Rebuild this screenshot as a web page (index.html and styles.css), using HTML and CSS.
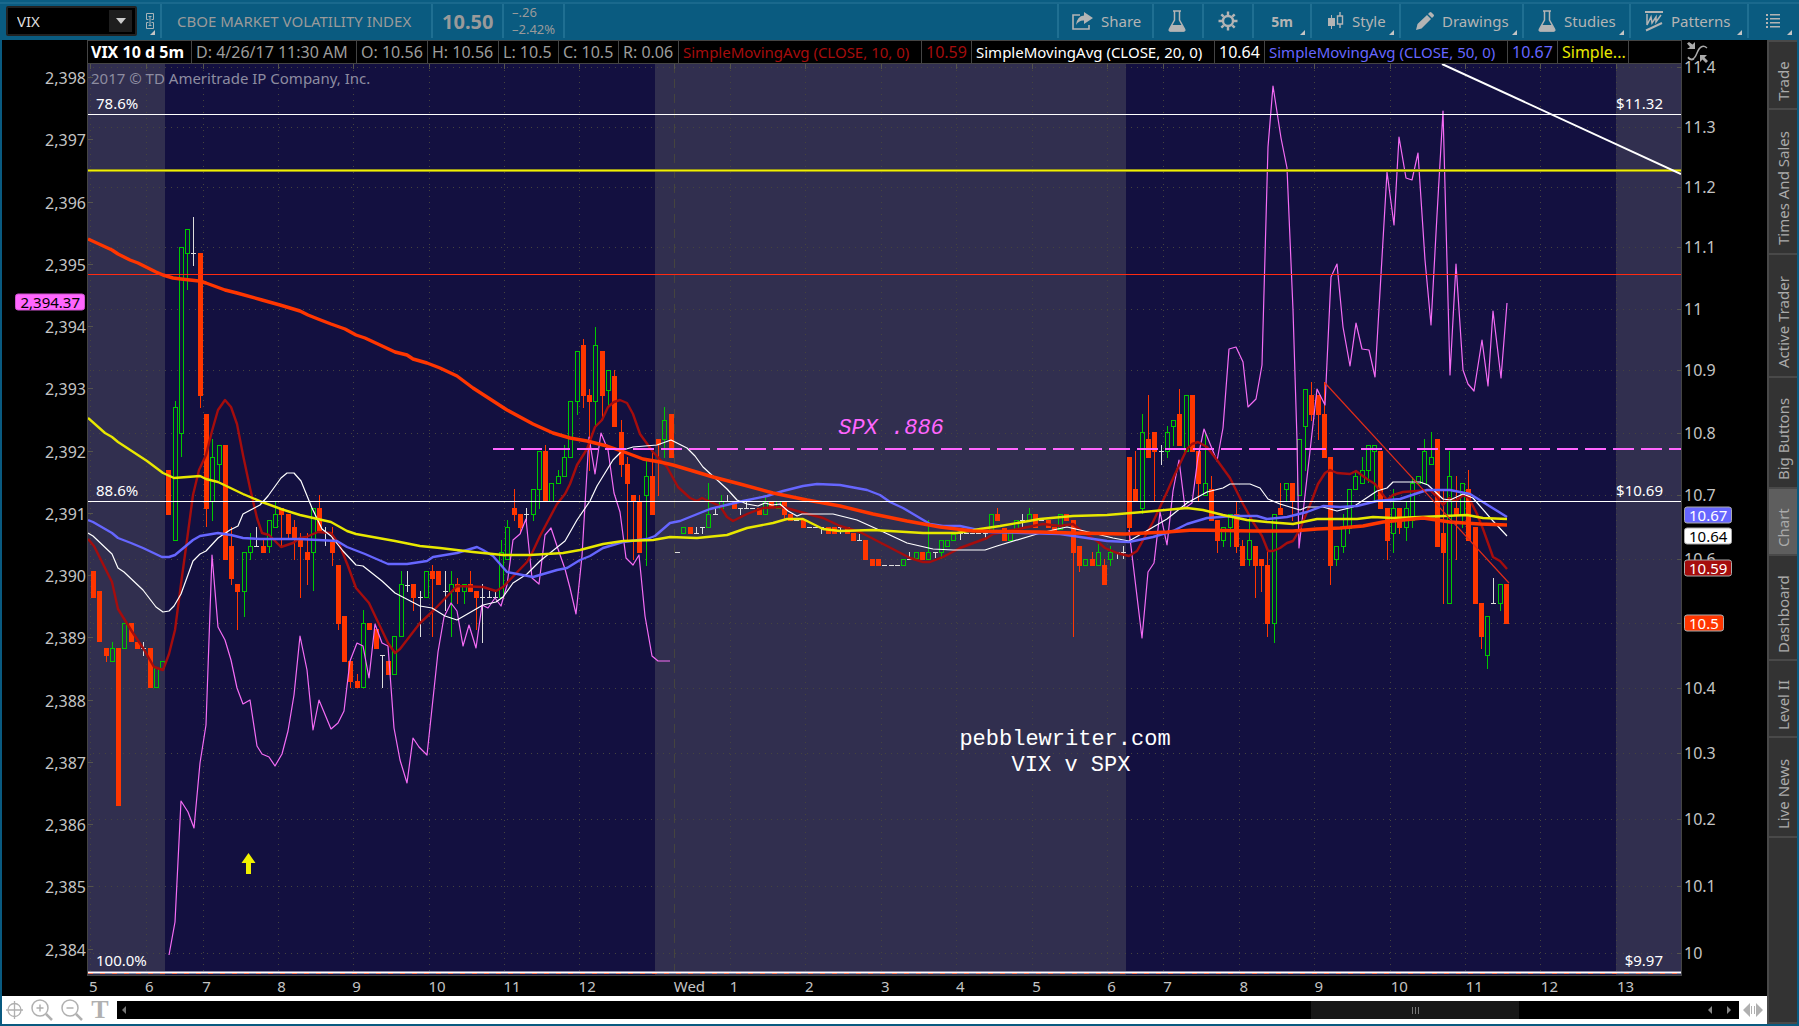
FILE: index.html
```html
<!DOCTYPE html>
<html lang="en">
<head>
    <meta charset="UTF-8">
    <meta name="viewport" content="width=device-width, initial-scale=1.0">
    <title>VIX 10 d 5m</title>
    <link rel="stylesheet" href="styles.css">
</head>
<body>
    <!-- Top toolbar -->
    <header class="toolbar">
        <div class="symbol-cell">
            <div class="symbol-box">
                <input type="text" class="symbol-input" value="VIX" aria-label="Symbol">
                <button class="symbol-drop" aria-label="Choose symbol"><svg width="10" height="6" viewBox="0 0 10 6"><path d="M0 0h10L5 6z" fill="#ccc"/></svg></button>
            </div>
            <button class="link-button" aria-label="Link">
                <svg width="8" height="16" viewBox="0 0 8 16" fill="none" stroke="#a9b4b9"><path d="M2.500 6.500H.5v-6h7v6h-2M2.500 9.500H.5v6h7v-6h-2M2.500 3.500h3M2.500 12.500h3M4 3.500v9"/></svg>
            </button>
        </div>
        <div class="tool-cell name-cell">CBOE MARKET VOLATILITY INDEX</div>
        <div class="tool-cell last-cell">10.50</div>
        <div class="tool-cell change-cell"><span>–.26</span><span>–2.42%</span></div>
        <div class="tool-cell spacer"></div>
        <button class="tool-cell share-cell">
            <svg width="21" height="18" viewBox="0 0 21 18"><path d="M8 3H1v14h16v-4" fill="none" stroke="#b4b4b4" stroke-width="1.6"/><path d="M12 0l9 6-9 6V8.500Q7 8 4 13Q5 4 12 3.500z" fill="#b4b4b4"/></svg>
            Share
        </button>
        <button class="tool-cell flask-cell" aria-label="Studies lab">
            <svg width="18" height="22" viewBox="0 0 18 22"><path d="M5 1h8M6.500 1v9L1.500 19q-1 2 1 2h13q2 0 1-2l-5-9V1" fill="none" stroke="#b4b4b4" stroke-width="1.500"/><path d="M4 15h10l3 5-1 1.500H2L1 20z" fill="#b4b4b4"/></svg>
        </button>
        <button class="tool-cell gear-cell" aria-label="Settings">
            <svg width="20" height="20" viewBox="-10 -10 20 20" stroke="#b4b4b4"><circle r="5" fill="none" stroke-width="2.400"/><path d="M0-9.500V-6M0 9.500V6M-9.500 0H-6M9.500 0H6M-6.700-6.700L-4.300-4.300M6.700 6.700L4.300 4.300M-6.700 6.700L-4.300 4.300M6.700-6.700L4.300-4.300" stroke-width="2.400"/></svg>
        </button>
        <button class="tool-cell period-cell has-menu">5m</button>
        <button class="tool-cell style-cell has-menu">
            <svg width="16" height="20" viewBox="0 0 16 20"><path d="M0 7h7v8H0zM3 4h1v14H3z" fill="#b4b4b4"/><path d="M9.500 5h5v8h-5zM12 1v4M12 13v4" fill="none" stroke="#b4b4b4" stroke-width="1.400"/></svg>
            Style
        </button>
        <button class="tool-cell drawings-cell has-menu">
            <svg width="18" height="18" viewBox="0 0 18 18" fill="#b4b4b4"><path d="M0 18l1.500-6L11 3l4 4-9.500 9.500zM12 2l1.500-1.500q1-1 2 0l2 2q1 1 0 2L16 6z"/></svg>
            Drawings
        </button>
        <button class="tool-cell studies-cell has-menu">
            <svg width="18" height="22" viewBox="0 0 18 22"><path d="M5 1h8M6.500 1v9L1.500 19q-1 2 1 2h13q2 0 1-2l-5-9V1" fill="none" stroke="#b4b4b4" stroke-width="1.500"/><path d="M4 15h10l3 5-1 1.500H2L1 20z" fill="#b4b4b4"/></svg>
            Studies
        </button>
        <button class="tool-cell patterns-cell has-menu">
            <svg width="18" height="22" viewBox="0 0 18 22" fill="none" stroke="#b4b4b4"><path d="M0 2h18M1 20.500L17 13" stroke-width="2"/><path d="M2 4v11l4-8 1 6 4-6v5l5-7" stroke-width="1.500"/></svg>
            Patterns
        </button>
        <button class="tool-cell list-cell has-menu" aria-label="Menu">
            <svg width="14" height="14" viewBox="0 0 14 14" fill="#b4b4b4"><path d="M0 0h2v2H0zM4 0h10v1.500H4zM0 4h2v2H0zM4 4h10v1.500H4zM0 8h2v2H0zM4 8h10v1.500H4zM0 12h2v2H0zM4 12h10v1.500H4z"/></svg>
        </button>
    </header>

    <div class="workspace">
        <main class="chart">
            <div class="info-bar">
                <span class="info info-title">VIX 10 d 5m</span>
                <span class="info info-date">D: 4/26/17 11:30 AM</span>
                <span class="info info-wide">O: 10.56</span>
                <span class="info info-wide">H: 10.56</span>
                <span class="info info-short">L: 10.5</span>
                <span class="info info-short">C: 10.5</span>
                <span class="info info-short">R: 0.06</span>
                <span class="info info-study red">SimpleMovingAvg (CLOSE, 10, 0)</span>
                <span class="info info-value red">10.59</span>
                <span class="info info-study white">SimpleMovingAvg (CLOSE, 20, 0)</span>
                <span class="info info-value white">10.64</span>
                <span class="info info-study blue">SimpleMovingAvg (CLOSE, 50, 0)</span>
                <span class="info info-value blue">10.67</span>
                <span class="info info-more yellow">Simple...</span>
                <span class="info info-rest"></span>
            </div>
            <button class="fit-button" aria-label="Fit chart">
                <svg width="21" height="21" viewBox="0 0 21 21"><path d="M1 15q5 6 9-4t10-5M1 16q3 3 6 1" fill="none" stroke="#aaa" stroke-width="1.500"/><path d="M0 7h8V0L5.500 2.500 2 0 0 1.500 3 5zM20 13h-7v7l2.500-2.500L19 21l2-2-3.500-3.500z" fill="#aaa"/></svg>
            </button>
            <div class="axis left-axis" id="leftAxis"></div>
            <div class="plot" id="plot">
                <svg class="plot-svg" id="plotSvg" viewBox="88 64 1593 911" preserveAspectRatio="none"></svg>
                <p class="copyright">2017 © TD Ameritrade IP Company, Inc.</p>
            </div>
            <div class="axis right-axis" id="rightAxis"></div>
            <div class="time-axis" id="timeAxis"></div>
        </main>

        <nav class="side-tabs">
            <button class="side-tab tab-trade">Trade</button>
            <button class="side-tab tab-times">Times And Sales</button>
            <button class="side-tab tab-active-trader">Active Trader</button>
            <button class="side-tab tab-big">Big Buttons</button>
            <button class="side-tab tab-chart selected">Chart</button>
            <button class="side-tab tab-dashboard">Dashboard</button>
            <button class="side-tab tab-level">Level II</button>
            <button class="side-tab tab-news">Live News</button>
            <div class="side-rest"></div>
        </nav>

        <!-- Zoom tools and scrollbar -->
        <footer class="bottom-bar">
            <button aria-label="Crosshair"><svg width="17" height="18" viewBox="0 0 17 18" fill="none" stroke="#b0b0b0" stroke-width="1.300"><circle cx="8.500" cy="9" r="6.500"/><path d="M8.500 0v18M0 9h17"/></svg></button>
            <button aria-label="Zoom in"><svg width="22" height="22" viewBox="0 0 22 22" fill="none" stroke="#b0b0b0" stroke-width="1.500"><circle cx="9" cy="9" r="8"/><path d="M9 5.500v7M5.500 9h7"/><path d="M15 15l6 6" stroke-width="2.500"/></svg></button>
            <button aria-label="Zoom out"><svg width="22" height="22" viewBox="0 0 22 22" fill="none" stroke="#b0b0b0" stroke-width="1.500"><circle cx="9" cy="9" r="8"/><path d="M5.500 9h7"/><path d="M15 15l6 6" stroke-width="2.500"/></svg></button>
            <button class="text-tool" aria-label="Text">T</button>
            <div class="scrollbar">
                <button aria-label="Scroll to start"><svg width="4" height="8" viewBox="0 0 4 8"><path d="M4 0v8L0 4z" fill="#777"/></svg></button>
                <div class="scroll-track"><div class="scroll-thumb"><i></i><i></i><i></i></div></div>
                <button aria-label="Scroll left"><svg width="4" height="8" viewBox="0 0 4 8"><path d="M4 0v8L0 4z" fill="#888"/></svg></button>
                <button aria-label="Scroll right"><svg width="4" height="8" viewBox="0 0 4 8"><path d="M0 0v8l4-4z" fill="#888"/></svg></button>
            </div>
            <button class="expand-button" aria-label="Expand range"><svg width="20" height="14" viewBox="0 0 20 14" fill="#b0b0b0"><path d="M7 0v14L0 7zM13 0v14l7-7zM8 3h1v8H8zM11 3h1v8h-1z"/></svg></button>
        </footer>
    </div>

    <script src="chart.js"></script>
</body>
</html>
```
FILE: styles.css
```css
* {
    box-sizing: border-box;
}

body {
    margin: 0;
    height: 100vh;
    display: flex;
    flex-direction: column;
    background-color: #095a80;
    color: #c4c4c4;
    font-family: "Noto Sans", "Open Sans", sans-serif;
    font-size: 15px;
    overflow: hidden;
}

button {
    margin: 0;
    padding: 0;
    border: none;
    background: none;
    color: inherit;
    font: inherit;
    cursor: pointer;
}

svg {
    display: block;
    flex: none;
}

/* Toolbar */
.toolbar {
    height: 40px;
    flex: none;
    display: flex;
    padding: 4px 2px 2px;
    background: linear-gradient(#0b5d82 2px, #1a698d 2px, #1a698d 4px, #0a5b80 4px);
    white-space: nowrap;
}

.symbol-cell {
    width: 158px;
    display: flex;
    align-items: center;
    gap: 9px;
    padding-left: 4px;
    position: relative;
}

.symbol-box {
    width: 131px;
    height: 30px;
    display: flex;
    align-items: center;
    padding: 0 3px 0 9px;
    border: 2px solid #222;
    border-radius: 2px;
    background-color: #000;
}

.symbol-input {
    flex: 1;
    min-width: 0;
    padding: 0;
    border: none;
    background: none;
    color: #ddd;
    font: 15px "Noto Sans", sans-serif;
}

.symbol-drop {
    width: 23px;
    height: 22px;
    display: flex;
    align-items: center;
    justify-content: center;
    background-color: #1e1e1e;
}

.tool-cell {
    display: flex;
    align-items: center;
    gap: 8px;
    border-left: 2px solid #1f6f92;
    color: #b4b4b4;
    font-size: 15px;
    position: relative;
}

/* Small corner triangle on buttons with a menu */
.has-menu::after,
.symbol-cell::after {
    content: "";
    position: absolute;
    right: 5px;
    bottom: 3px;
    border-left: 5px solid transparent;
    border-bottom: 5px solid #c4c4c4;
}

.name-cell {
    width: 271px;
    padding-left: 15px;
    color: #9a9a9a;
}

.last-cell {
    width: 71px;
    padding-left: 9px;
    color: #9a9a9a;
    font-size: 20px;
    font-weight: bold;
}

.change-cell {
    width: 61px;
    padding-left: 8px;
    flex-direction: column;
    align-items: flex-start;
    justify-content: center;
    gap: 0;
    color: #9a9a9a;
    font-size: 13px;
    line-height: 17px;
}

.spacer {
    flex: 1;
}

.share-cell {
    width: 95px;
    padding-left: 13px;
}

.flask-cell,
.gear-cell {
    width: 50px;
    padding-left: 14px;
}

.period-cell {
    width: 58px;
    justify-content: center;
    font-size: 14px;
    font-weight: bold;
}

.style-cell {
    width: 89px;
    padding-left: 16px;
}

.drawings-cell {
    width: 123px;
    padding-left: 15px;
}

.studies-cell {
    width: 107px;
    padding-left: 14px;
}

.patterns-cell {
    width: 118px;
    padding-left: 14px;
}

.list-cell {
    width: 50px;
    padding-left: 17px;
}

/* Chart area, tabs on the right, tools at the bottom */
.workspace {
    flex: 1;
    min-height: 0;
    display: grid;
    grid-template-columns: 1fr 30px;
    grid-template-rows: 1fr 28px;
    margin: 0 2px 2px;
    background-color: #000;
}

.chart {
    min-width: 0;
    min-height: 0;
    display: grid;
    grid-template-columns: 85px 1fr 85px;
    grid-template-rows: 24px 1fr 20px;
}

.info-bar {
    grid-column: 2;
    display: flex;
    border: 1px solid #444;
    border-left: none;
    overflow: hidden;
    white-space: nowrap;
}

.info {
    flex: none;
    padding-left: 4px;
    border-left: 1px solid #444;
    color: #9c9c9c;
    font-size: 16px;
    line-height: 22px;
    overflow: hidden;
}

.info-title {
    width: 104px;
    padding-left: 3px;
    color: #fff;
    font-weight: bold;
}

.info-date {
    width: 165px;
}

.info-wide {
    width: 71px;
}

.info-short {
    width: 60px;
}

.info-study {
    width: 243px;
    font-size: 15px;
}

.info-value {
    width: 50px;
}

.info-more {
    width: 71px;
}

.info-rest {
    flex: 1;
}

.info.red {
    color: #a50d0d;
}

.info.white {
    color: #fff;
}

.info.blue {
    color: #6666ff;
}

.info.yellow {
    color: #e8e800;
}

.fit-button {
    padding: 2px 0 0 5px;
    align-self: start;
    justify-self: start;
}

.axis {
    position: relative;
    font-size: 16px;
}

.left-axis {
    grid-column: 1;
}

.axis-label {
    position: absolute;
    line-height: 20px;
    transform: translateY(-50%);
}

.left-axis .axis-label {
    right: 1px;
}

.right-axis .axis-label {
    left: 2px;
}

.price-tag {
    position: absolute;
    padding: 0 4px;
    border: 1px solid #aaa;
    border-radius: 3px;
    font-size: 15px;
    line-height: 15px;
    transform: translateY(-50%);
}

.left-axis .price-tag {
    right: 2px;
}

.right-axis .price-tag {
    left: 2px;
}

.tag-spx {
    background-color: #ff66ff;
    border-color: #cc52cc;
    color: #000;
}

.tag-blue {
    background-color: #6666ff;
    color: #fff;
}

.tag-white {
    background-color: #fff;
    color: #000;
}

.tag-red {
    background-color: #a50d0d;
    color: #fff;
}

.tag-orange {
    background-color: #ff3600;
    color: #fff;
}

.plot {
    position: relative;
    border: 1px solid #444;
    border-top: none;
    background-color: #131040;
    overflow: hidden;
}

.plot-svg {
    width: 100%;
    height: 100%;
}

.copyright {
    position: absolute;
    top: 4px;
    left: 3px;
    margin: 0;
    color: #8d8ca0;
    font-size: 15px;
    line-height: 20px;
}

.level-label,
.note {
    position: absolute;
    color: #fff;
    line-height: 20px;
    white-space: nowrap;
    transform: translateY(-50%);
}

.level-left {
    left: 8px;
}

.level-right {
    right: 18px;
}

.note {
    font-family: "Courier New", "Liberation Mono", monospace;
    font-size: 22px;
    line-height: 26px;
    text-align: center;
    transform: translate(-50%, -50%);
}

.note-spx {
    color: #ff66ff;
    font-style: italic;
}

.time-axis {
    grid-column: 2;
    position: relative;
}

.time-label {
    position: absolute;
    top: 0;
    line-height: 20px;
}

/* Shapes drawn in the plot */
.band {
    fill: #312f4f;
}

.grid {
    stroke: #45443f;
    stroke-width: 1;
    stroke-dasharray: 1 5;
}

.grid-day {
    stroke: #45443f;
    stroke-dasharray: 9 6;
}

.tick {
    stroke: #55544c;
}

.line {
    fill: none;
    stroke-linejoin: round;
}

.sma-red {
    stroke: #a50d0d;
    stroke-width: 2.4;
}

.sma-white {
    stroke: #fff;
    stroke-width: 1.2;
}

.sma-blue {
    stroke: #6666ff;
    stroke-width: 2.4;
}

.sma-yellow {
    stroke: #e8e800;
    stroke-width: 2.4;
}

.sma-orange {
    stroke: #ff3600;
    stroke-width: 3.4;
}

.spx {
    stroke: #f56cf5;
    stroke-width: 1.2;
}

.crisp {
    shape-rendering: crispEdges;
}

.up {
    fill: none;
    stroke: #00c800;
}

.down {
    fill: #ff3600;
    stroke: none;
}

.down-wick {
    stroke: #ff3600;
}

.flat {
    stroke: #ddd;
}

/* Right side tabs */
.side-tabs {
    grid-row: 1 / 3;
    grid-column: 2;
    display: flex;
    flex-direction: column;
    gap: 2px;
    padding: 2px 0 2px 2px;
    background-color: #494949;
}

/* Rotated by half a turn, so the bottom padding is seen on top */
.side-tab {
    writing-mode: vertical-rl;
    transform: rotate(180deg);
    width: 28px;
    padding-bottom: 13px;
    background-color: #333;
    color: #aaa;
    font-size: 15px;
    line-height: 28px;
    text-align: center;
}

.side-tab.selected {
    background-color: #5e5e5e;
}

.tab-trade {
    height: 66px;
}

.tab-times {
    height: 143px;
}

.tab-active-trader {
    height: 121px;
}

.tab-big {
    height: 109px;
}

.tab-chart {
    height: 65px;
}

.tab-dashboard {
    height: 103px;
}

.tab-level {
    height: 75px;
}

.tab-news {
    height: 98px;
}

.side-rest {
    flex: 1;
    background-color: #333;
}

/* Bottom tools */
.bottom-bar {
    grid-row: 2;
    grid-column: 1;
    display: flex;
    align-items: center;
    gap: 8px;
    padding: 0 4px;
    background-color: #fff;
}

.text-tool {
    width: 18px;
    color: #b0b0b0;
    font: bold 26px/28px "Liberation Serif", serif;
}

.scrollbar {
    flex: 1;
    height: 18px;
    display: flex;
    align-items: center;
    gap: 15px;
    padding: 0 8px 0 5px;
    background-color: #000;
}

.scroll-track {
    flex: 1;
    align-self: stretch;
}

.scroll-thumb {
    width: 13.4%;
    height: 100%;
    margin-left: 75.4%;
    display: flex;
    align-items: center;
    justify-content: center;
    gap: 2px;
    background-color: #181818;
}

.scroll-thumb i {
    width: 1px;
    height: 7px;
    background-color: #777;
}

.expand-button {
    margin-left: -4px;
}
```
FILE: chart.js
```js
// Plot bounds, same units as the viewBox
const LEFT = 88;
const TOP = 64;
const WIDTH = 1593;
const HEIGHT = 911;
const RIGHT = LEFT + WIDTH;
const BOTTOM = TOP + HEIGHT;

// One bar per 5 minutes: kind, high, top of body, bottom of body, low (r = down, g = up, w = unchanged)
const bars = `
r571,571,598,598 r591,591,642,642 r648,648,656,662 g642,648,661,661 r648,648,806,806 g623,623,648,648
r623,623,642,642 r642,642,649,649 w642,648,648,656 r648,648,688,688 g668,668,687,687 g661,661,668,668
r470,470,515,515 g401,407,540,540 g247,247,433,457 g229,229,253,290 w217,253,253,266 r253,253,396,408
r414,414,509,527 g439,457,501,521 g445,445,464,481 r445,445,560,560 r527,546,579,585 r584,584,592,630
g552,552,591,617 g533,546,552,560 w527,546,546,546 r539,546,553,553 g520,520,546,553 g501,514,527,527
r508,508,515,546 r514,514,534,540 r520,527,540,560 r533,540,547,598 r533,552,560,585 g508,508,552,591
r495,508,531,531 w527,532,532,546 r527,542,553,566 r565,565,624,630 r616,616,662,662 r661,661,682,688
r674,681,688,688 g610,623,687,687 r623,623,630,630 r629,629,649,649 w655,655,655,688 r661,661,675,675
g636,636,674,674 g571,584,636,636 w571,585,585,592 r584,584,598,611 w591,597,597,637 g571,571,597,597
r565,571,579,637 r571,571,585,585 w571,591,591,611 g571,584,591,637 r578,584,592,604 g584,584,591,604
r571,584,592,592 r591,591,598,630 w584,597,597,643 w591,597,597,597 w591,597,597,597 g540,552,597,597
g520,527,559,559 r489,508,515,521 r514,514,528,534 w508,514,514,521 g489,489,514,521 g451,451,489,509
r445,451,501,501 g483,483,501,501 g470,476,483,483 g445,457,476,476 g401,401,457,457 g351,351,401,415
r339,345,396,408 r389,395,402,471 g327,345,401,426 r351,351,396,420 g370,370,390,407 r370,376,427,427
r420,432,465,477 r457,464,484,540 r495,495,501,560 r495,501,553,553 g458,476,495,566 r453,476,515,515
r439,439,445,496 g407,420,439,458 r414,414,458,458 w552,552,552,552 g527,527,533,533 r527,527,534,534
w527,533,533,533 w527,527,527,534 g483,514,527,527 w508,514,514,514 g495,501,508,508 w495,501,501,501
r501,501,509,509 w508,508,508,515 w501,508,508,508 w508,508,508,508 r508,508,515,515 g497,501,514,514
r501,501,508,508 g501,501,508,508 r501,501,515,519 r514,514,521,521 w520,520,520,520 r520,520,528,528
w527,527,527,527 w527,527,527,527 w527,527,527,534 r527,527,534,534 r527,527,534,534 w527,527,527,534
r527,527,534,534 r533,533,541,541 w534,540,540,540 r540,540,560,560 r559,559,566,566 r559,559,566,566
w565,565,565,565 w565,565,565,565 w565,565,565,565 g559,559,565,565 w552,559,559,559 g552,552,558,558
r552,552,560,560 g520,552,559,559 w552,552,552,558 g540,540,552,559 g540,540,546,546 g534,534,540,540
w533,533,533,540 w533,533,533,533 w533,533,533,533 w533,533,533,533 w533,533,533,540 g514,514,530,530
r508,514,521,521 r528,528,541,541 g533,533,540,540 g520,520,529,529 w514,520,520,527 g508,514,520,520
r514,514,528,528 w520,520,520,520 r520,520,528,528 r527,527,531,531 g514,514,529,529 r514,514,521,521
r520,520,553,637 r546,546,566,572 g559,559,565,565 r552,559,566,566 g542,552,565,565 r559,565,585,585
g546,552,559,566 w552,552,552,559 w546,552,552,559 r457,457,528,541 r451,489,501,501 g414,432,508,514
r395,439,458,458 r432,432,452,501 w445,451,451,465 g426,432,451,458 g420,420,426,446 r389,414,446,446
g395,395,451,451 r395,395,452,452 r451,451,484,501 g432,483,495,495 r476,489,521,521 r520,520,541,553
g527,527,540,547 g514,514,527,547 r502,514,547,553 r540,546,566,566 g514,540,559,566 r546,546,566,598
r559,559,566,592 r551,565,624,637 g514,514,623,643 r483,508,515,515 g483,483,489,501 r483,483,501,521
g439,439,495,495 g389,389,426,471 r382,395,415,421 r395,395,415,440 r382,414,458,458 r457,457,566,585
g546,546,559,566 g514,527,546,553 g489,489,528,534 g472,476,489,489 g457,470,483,483 g445,445,470,483
g445,445,451,502 r451,451,509,509 r508,508,541,560 g489,508,533,553 r508,508,528,534 g502,508,527,541
g477,483,520,528 g476,476,483,483 g439,451,483,483 g432,457,464,464 r439,439,547,547 r489,533,553,604
g451,476,603,603 r476,508,515,560 g483,483,515,528 r470,489,541,541 r527,527,604,604 r603,603,637,649
g616,616,655,669 w578,603,603,603 g584,584,603,611 r584,584,624,624
`.trim().split(/\s+/);

const smaRed = '88,539 94,546 112,582 118,609 131,630 143,648 154,667 163,670 169,654 175,630 181,584 187,540 193,495 199,470 206,455 212,431 218,410 225,400 231,407 237,424 243,455 250,488 257,518 262,533 269,535 281,547 293,543 300,538 306,537 318,532 331,533 340,546 348,566 356,588 369,603 377,620 388,643 395,653 400,649 420,623 433,611 457,586 483,587 496,591 503,587 527,562 533,551 540,536 557,504 565,494 570,484 577,465 587,449 595,427 602,420 608,407 614,402 620,400 627,403 633,414 640,434 653,452 667,467 678,487 690,498 697,501 702,498 713,503 720,506 727,517 733,521 747,514 763,508 783,507 797,511 823,518 840,526 860,532 887,546 910,558 923,562 930,562 943,557 960,548 987,538 993,534 1023,528 1043,524 1060,526 1073,524 1083,532 1097,541 1105,548 1117,553 1129,556 1137,551 1153,522 1167,492 1175,474 1187,449 1192,444 1198,442 1207,447 1217,460 1230,478 1243,504 1253,522 1262,536 1268,551 1273,551 1280,548 1287,543 1293,541 1300,529 1312,500 1318,484 1325,473 1330,470 1337,473 1350,474 1356,471 1367,479 1375,484 1380,491 1387,500 1393,495 1403,492 1417,491 1430,490 1437,497 1443,505 1449,498 1456,501 1463,495 1469,498 1477,514 1483,529 1493,557 1500,561 1507,569';

const smaWhite = '88,533 93,536 112,554 118,568 124,572 143,590 156,607 163,612 169,611 174,606 181,594 193,561 200,554 206,551 218,538 230,530 238,526 243,514 260,505 268,496 281,478 287,473 294,473 301,481 312,508 322,529 331,536 343,551 356,565 363,566 382,581 395,593 420,606 432,608 445,616 457,620 483,605 496,602 503,597 513,583 527,574 540,561 565,541 577,520 590,501 597,486 613,460 623,450 633,447 657,445 671,440 687,448 695,456 703,467 727,489 737,500 747,504 758,506 765,503 772,505 780,504 788,511 797,516 802,514 833,514 857,520 877,529 907,543 933,549 953,550 985,550 997,546 1037,534 1053,530 1067,527 1080,530 1113,538 1129,541 1143,533 1167,519 1187,503 1207,492 1223,488 1230,484 1250,484 1260,488 1268,499 1280,504 1300,510 1307,507 1323,507 1337,511 1353,507 1377,491 1387,488 1393,482 1420,482 1428,485 1443,499 1450,500 1463,494 1473,498 1493,521 1507,536';

const smaBlue = '88,520 93,522 112,533 118,538 131,543 143,548 162,557 169,557 175,555 193,540 200,536 218,533 231,535 243,538 260,539 300,539 337,541 347,547 365,554 388,564 407,564 427,561 433,557 457,553 477,547 483,550 493,556 507,572 533,577 557,570 567,568 580,560 590,556 603,548 623,542 647,539 655,536 670,523 680,521 710,509 743,501 767,496 783,491 803,486 817,484 840,485 867,490 880,495 890,502 903,508 930,524 943,526 960,526 987,532 1060,534 1107,541 1129,542 1153,537 1173,531 1187,524 1207,518 1233,516 1257,516 1267,519 1287,517 1307,512 1323,506 1340,507 1357,506 1377,501 1400,499 1427,490 1450,490 1470,494 1507,517';

const smaYellow = '88,418 105,433 112,437 118,442 147,461 163,473 174,478 187,477 200,476 206,479 218,482 243,494 262,502 281,509 300,515 331,522 347,531 356,534 395,541 420,546 440,548 473,552 503,555 530,555 563,553 580,550 603,544 623,541 653,540 670,537 697,538 727,535 747,528 773,523 787,519 803,519 823,529 840,531 873,530 923,533 957,533 980,529 1000,526 1040,519 1073,516 1107,515 1143,512 1187,508 1203,510 1223,515 1247,520 1267,522 1293,524 1317,519 1357,519 1373,517 1393,518 1420,517 1467,515 1483,518 1507,519';

const smaOrange = '88,239 112,250 118,254 130,260 138,263 156,272 163,275 173,278 181,279 199,281 206,283 225,290 237,293 262,300 280,305 300,311 308,315 318,319 331,324 345,329 356,335 365,338 395,352 407,355 413,359 427,363 440,368 457,376 473,388 507,410 533,424 553,433 570,438 587,441 607,446 627,453 643,459 660,462 673,465 713,477 740,484 773,493 807,500 840,506 873,514 907,521 940,527 973,531 1040,532 1073,533 1125,534 1167,532 1193,530 1253,531 1293,531 1317,529 1340,528 1363,526 1383,522 1423,518 1450,522 1480,524 1507,525';

const spxTuesday = '169,955 175,922 181,801 188,812 194,828 200,763 206,725 212,555 218,627 225,640 231,660 237,688 243,704 250,700 257,746 262,754 269,757 275,766 282,754 288,731 294,695 300,636 307,670 313,730 319,700 331,729 338,723 344,711 350,661 357,643 363,646 369,678 375,624 382,643 388,646 394,728 400,760 407,783 413,738 419,747 427,755 438,652 444,617 451,603 457,611 463,646 469,625 476,648 482,605 488,608 495,598 501,606 507,585 513,540 520,534 526,519 532,578 539,584 545,535 551,528 558,549 565,569 570,588 576,614 582,556 589,437 595,474 601,433 608,450 614,493 620,512 626,558 633,565 639,555 645,616 652,656 658,661 670,661';

const spxWednesday = '1129,530 1142,638 1148,572 1154,563 1160,512 1167,545 1173,491 1179,460 1185,508 1192,503 1198,457 1204,429 1217,461 1223,428 1229,349 1236,347 1243,362 1248,407 1256,399 1262,365 1268,147 1273,86 1281,138 1287,168 1293,310 1297,440 1299,548 1309,460 1317,389 1325,405 1331,277 1337,264 1343,327 1350,366 1356,323 1362,349 1369,350 1375,377 1387,172 1394,225 1399,137 1406,178 1412,180 1418,153 1425,260 1431,325 1437,215 1443,111 1450,375 1456,264 1463,370 1468,384 1474,391 1482,340 1488,386 1493,311 1501,378 1507,303';

const hours = [
    [90, '5'], [146, '6'], [203, '7'], [278, '8'], [353, '9'], [429, '10'], [504, '11'], [579, '12'],
    [674, 'Wed'], [730, '1'], [805, '2'], [881, '3'], [956, '4'], [1032, '5'], [1107, '6'],
    [1163, '7'], [1239, '8'], [1314, '9'], [1390, '10'], [1465, '11'], [1540, '12'], [1616, '13']
];

const svg = document.getElementById('plotSvg');
const plot = document.getElementById('plot');
const leftAxis = document.getElementById('leftAxis');
const rightAxis = document.getElementById('rightAxis');
const timeAxis = document.getElementById('timeAxis');

// The VIX scale is logarithmic, the SPX scale is linear
function vixY(price) {
    return 953 - 886 * Math.log(price / 10) / Math.log(1.14);
}

function spxY(price) {
    return 77 + (2398 - price) * 62.25;
}

function draw(name, attributes) {
    const el = document.createElementNS('http://www.w3.org/2000/svg', name);
    for (const key in attributes) {
        el.setAttribute(key, attributes[key]);
    }
    svg.appendChild(el);
    return el;
}

function drawLine(x1, y1, x2, y2, className) {
    return draw('line', { x1, y1, x2, y2, class: className });
}

function addText(parent, className, text, x, y) {
    const el = document.createElement('span');
    el.className = className;
    el.textContent = text;
    if (x !== null) {
        el.style.left = (x - LEFT) / WIDTH * 100 + '%';
    }
    if (y !== null) {
        el.style.top = (y - TOP) / HEIGHT * 100 + '%';
    }
    parent.appendChild(el);
}

// Sessions outside trading hours
[[LEFT, 165], [655, 1126], [1616, RIGHT]].forEach(function([from, to]) {
    draw('rect', { x: from, y: TOP, width: to - from, height: HEIGHT, class: 'band crisp' });
});

// Time grid
hours.forEach(function([x, label]) {
    drawLine(x + 0.5, TOP, x + 0.5, BOTTOM, (label === 'Wed' ? 'grid-day' : 'grid') + ' crisp');
    drawLine(x + 0.5, TOP, x + 0.5, TOP + 5, 'tick crisp');
    addText(timeAxis, 'time-label', label, x, null);
});

// VIX grid and labels
for (let i = 0; i <= 14; i++) {
    const price = 10 + i / 10;
    const y = Math.round(vixY(price)) + 0.5;
    drawLine(LEFT + 5, y, RIGHT, y, 'grid crisp');
    drawLine(RIGHT - 4, y, RIGHT, y, 'tick crisp');
    addText(rightAxis, 'axis-label', String(Number(price.toFixed(1))), null, y - 1);
}

// SPX labels
for (let price = 2384; price <= 2398; price++) {
    const y = Math.round(spxY(price)) + 0.5;
    drawLine(LEFT, y, LEFT + 5, y, 'tick crisp');
    addText(leftAxis, 'axis-label', price.toLocaleString('en-US'), null, y);
}

// Candles
bars.forEach(function(bar, index) {
    const kind = bar[0];
    const [high, top, bottom, low] = bar.slice(1).split(',').map(Number);
    const x = Math.round(93 + index * 6.28) + 0.5;
    if (kind === 'r') {
        drawLine(x, high, x, low, 'down-wick crisp');
        draw('rect', { x: x - 2.5, y: top, width: 5, height: bottom - top, class: 'down crisp' });
    } else if (kind === 'g') {
        drawLine(x, high, x, top, 'up crisp');
        drawLine(x, bottom, x, low, 'up crisp');
        draw('rect', { x: x - 2, y: top + 0.5, width: 4, height: bottom - top, class: 'up crisp' });
    } else {
        drawLine(x, high, x, low, 'flat crisp');
        drawLine(x - 2.5, top + 0.5, x + 2.5, top + 0.5, 'flat crisp');
    }
});

// Studies
draw('polyline', { points: spxTuesday, class: 'line spx' });
draw('polyline', { points: spxWednesday, class: 'line spx' });
draw('polyline', { points: smaRed, class: 'line sma-red' });
draw('polyline', { points: smaWhite, class: 'line sma-white' });
draw('polyline', { points: smaBlue, class: 'line sma-blue' });
draw('polyline', { points: smaYellow, class: 'line sma-yellow' });
draw('polyline', { points: smaOrange, class: 'line sma-orange' });

// Drawn levels
draw('path', { d: 'M88 114.500H1681M88 501.500H1681', stroke: '#fff', class: 'crisp' });
draw('path', { d: 'M88 170.500H1681', stroke: '#96941c', 'stroke-width': 3, class: 'crisp' });
draw('path', { d: 'M88 170.500H1681', stroke: '#f0f000', class: 'crisp' });
draw('path', { d: 'M88 274.500H1681', stroke: '#ff2a10', class: 'crisp' });
draw('path', { d: 'M493 449H1681', stroke: '#ff66ff', 'stroke-width': 2, 'stroke-dasharray': '21 7', class: 'crisp' });
draw('path', { d: 'M88 972.500H1681', stroke: '#8f8da6', 'stroke-width': 3, class: 'crisp' });
draw('path', { d: 'M88 972.500H1681', stroke: '#fff', class: 'crisp' });
draw('path', { d: 'M88 973.500H1681', stroke: '#ff8060', 'stroke-dasharray': '5 7', class: 'crisp' });
draw('path', { d: 'M1442 64L1681 174', stroke: '#fff', 'stroke-width': 2 });
draw('path', { d: 'M1325 383L1509 583', stroke: '#e02c18', 'stroke-width': 1.2 });
draw('path', { d: 'M248.500 853l7 10h-4.500v11h-5v-11h-4.500z', fill: '#f0f000' });

addText(plot, 'level-label level-left', '78.6%', null, 103);
addText(plot, 'level-label level-left', '88.6%', null, 490);
addText(plot, 'level-label level-left', '100.0%', null, 960);
addText(plot, 'level-label level-right', '$11.32', null, 103);
addText(plot, 'level-label level-right', '$10.69', null, 490);
addText(plot, 'level-label level-right', '$9.97', null, 960);
addText(plot, 'note note-spx', 'SPX .886', 891, 429);
addText(plot, 'note', 'pebblewriter.com', 1065, 740);
addText(plot, 'note', 'VIX v SPX', 1071, 766);

addText(leftAxis, 'price-tag tag-spx', '2,394.37', null, 302);
addText(rightAxis, 'price-tag tag-blue', '10.67', null, 515);
addText(rightAxis, 'price-tag tag-white', '10.64', null, 535);
addText(rightAxis, 'price-tag tag-red', '10.59', null, 567);
addText(rightAxis, 'price-tag tag-orange', '10.5', null, 622);
```
